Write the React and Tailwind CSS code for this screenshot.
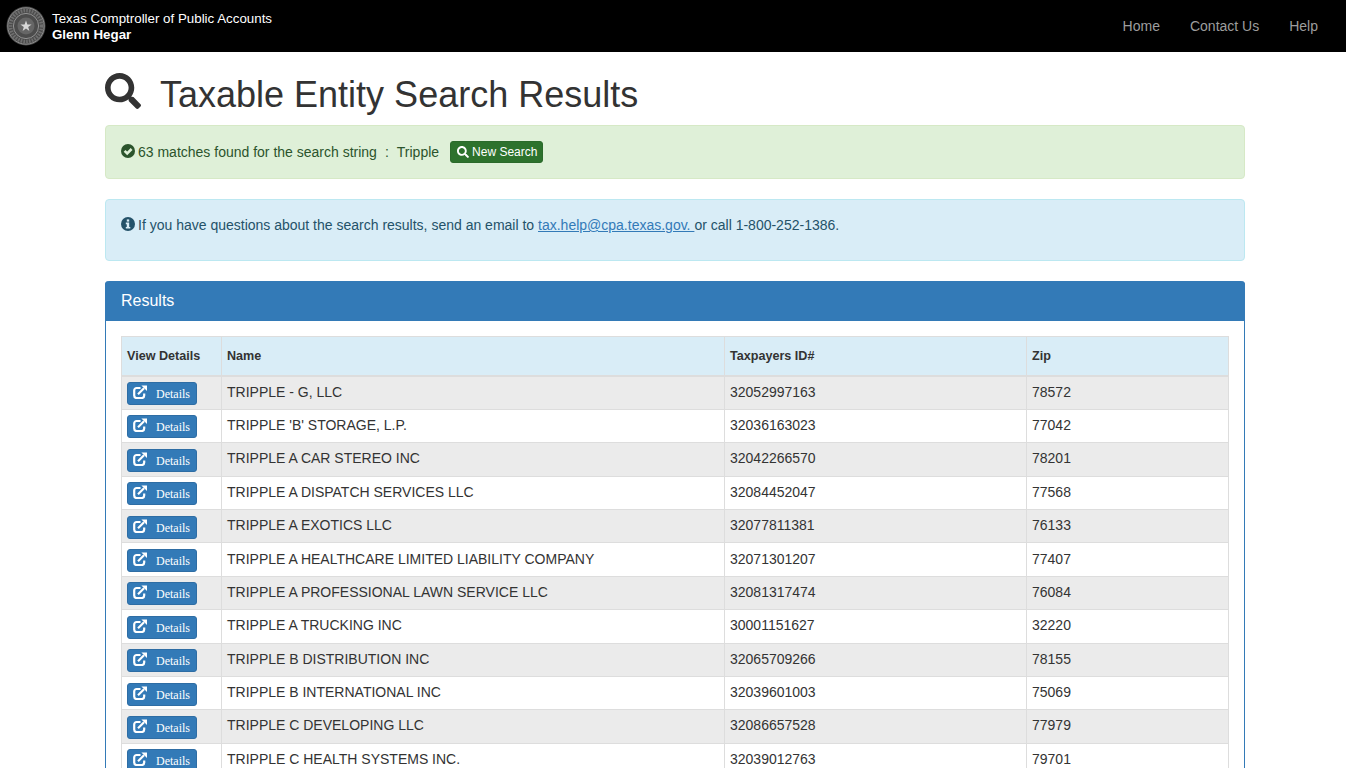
import React from "react";
import { FaSearch } from "react-icons/fa";

const rows = [
  ["TRIPPLE - G, LLC", "32052997163", "78572"],
  ["TRIPPLE 'B' STORAGE, L.P.", "32036163023", "77042"],
  ["TRIPPLE A CAR STEREO INC", "32042266570", "78201"],
  ["TRIPPLE A DISPATCH SERVICES LLC", "32084452047", "77568"],
  ["TRIPPLE A EXOTICS LLC", "32077811381", "76133"],
  ["TRIPPLE A HEALTHCARE LIMITED LIABILITY COMPANY", "32071301207", "77407"],
  ["TRIPPLE A PROFESSIONAL LAWN SERVICE LLC", "32081317474", "76084"],
  ["TRIPPLE A TRUCKING INC", "30001151627", "32220"],
  ["TRIPPLE B DISTRIBUTION INC", "32065709266", "78155"],
  ["TRIPPLE B INTERNATIONAL INC", "32039601003", "75069"],
  ["TRIPPLE C DEVELOPING LLC", "32086657528", "77979"],
  ["TRIPPLE C HEALTH SYSTEMS INC.", "32039012763", "79701"],
];

function Seal() {
  return (
    <svg width="40" height="40" viewBox="0 0 40 40" className="shrink-0">
      <circle cx="20" cy="20" r="19.5" fill="#4a4a4a" />
      <circle cx="20" cy="20" r="18.2" fill="none" stroke="#8c8c8c" strokeWidth="1" />
      <circle cx="20" cy="20" r="15.5" fill="none" stroke="#6f6f6f" strokeWidth="3.6" strokeDasharray="1.6 1.2" />
      <circle cx="20" cy="20" r="12.6" fill="#4c4c4c" stroke="#9a9a9a" strokeWidth="0.9" />
      <circle cx="20" cy="20" r="8.5" fill="#666" />
      <polygon points="20,14.5 21.4,18.4 25.6,18.4 22.2,20.9 23.4,25 20,22.6 16.6,25 17.8,20.9 14.4,18.4 18.6,18.4" fill="#d8d8d8" />
    </svg>
  );
}

function ShareIcon() {
  return (
    <svg width="14" height="14" viewBox="0 0 14 14" className="shrink-0 mr-[9px] -mt-[3px]">
      <path d="M7.5 3H3.6A2.4 2.4 0 0 0 1.2 5.4v5.2A2.4 2.4 0 0 0 3.6 13h5.2a2.4 2.4 0 0 0 2.4-2.4V8.5" fill="none" stroke="#fff" strokeWidth="2.2" />
      <path d="M8.4 0.4H14V6Z" fill="#fff" />
      <path d="M5 9.2L11 3.2" fill="none" stroke="#fff" strokeWidth="2.2" />
    </svg>
  );
}

function CheckSign() {
  return (
    <svg width="14" height="14" viewBox="0 0 14 14" className="shrink-0 mr-[3px] -mt-[2px]">
      <circle cx="7" cy="7" r="7" fill="#2b542c" />
      <path d="M3.6 6.8L6.2 9.4L10.6 5" fill="none" stroke="#dff0d8" strokeWidth="2.6" />
    </svg>
  );
}

function InfoSign() {
  return (
    <svg width="14" height="14" viewBox="0 0 14 14" className="shrink-0 mr-[3px] mt-[2px]">
      <circle cx="7" cy="7" r="7" fill="#245269" />
      <rect x="5.8" y="2.4" width="2.4" height="2.2" fill="#d9edf7" />
      <path d="M4.8 5.6H8.2V10H9.3V11.6H4.8V10H5.8V7.2H4.8Z" fill="#d9edf7" />
    </svg>
  );
}

export default function App() {
  return (
    <div className="h-[768px] overflow-hidden bg-white text-[14px] leading-[20px] text-[#333] font-['Liberation_Sans',Arial,sans-serif]">
      <nav className="h-[52px] bg-black flex items-center justify-between pl-[6px] pr-[13px]">
        <div className="flex items-center gap-[6px]">
          <Seal />
          <div className="text-white text-[13.33px] leading-[16px] pt-[2px]">
            <div>Texas Comptroller of Public Accounts</div>
            <div className="font-bold">Glenn Hegar</div>
          </div>
        </div>
        <div className="flex text-[#9d9d9d]">
          <a className="px-[15px]">Home</a>
          <a className="px-[15px]">Contact Us</a>
          <a className="px-[15px]">Help</a>
        </div>
      </nav>

      <main className="w-[1140px] ml-[105px]">
        <h1 className="flex items-start h-[73px] text-[36px] leading-[40px] font-normal text-[#333]">
          <FaSearch className="text-[36px] mt-[21px] mr-[19px]" />
          <span className="mt-[23px]">Taxable Entity Search Results</span>
        </h1>

        <div className="h-[54px] mb-[20px] flex items-center rounded-[4px] border border-[#d6e9c6] bg-[#dff0d8] text-[#2b542c] pl-[15px]">
          <CheckSign />
          <span>63 matches found for the search string</span>
          <span className="ml-[8px]">:</span>
          <span className="ml-[8px]">Tripple</span>
          <a className="ml-[11px] h-[22px] flex items-center rounded-[3px] bg-[#2d722d] border border-[#2b6a2b] text-white text-[12px] pl-[6px] pr-[5px]">
            <FaSearch className="text-[12px] mr-[3px]" />
            New Search
          </a>
        </div>

        <div className="h-[62px] mb-[20px] flex items-start rounded-[4px] border border-[#bce8f1] bg-[#d9edf7] text-[#245269] pl-[15px] pt-[15px]">
          <InfoSign />
          <span>
            If you have questions about the search results, send an email to{" "}
            <a className="text-[#337ab7] underline">tax.help@cpa.texas.gov. </a>
            {" "}or call 1-800-252-1386.
          </span>
        </div>

        <section className="rounded-t-[4px] border-x border-[#337ab7]">
          <div className="-mx-px h-[40px] flex items-center rounded-t-[4px] bg-[#337ab7] text-white text-[16px] px-[16px]">
            Results
          </div>
          <div className="p-[15px]">
            <table className="w-full table-fixed border-collapse">
              <colgroup>
                <col className="w-[100px]" />
                <col className="w-[503px]" />
                <col className="w-[302px]" />
                <col />
              </colgroup>
              <thead>
                <tr className="h-[39.4px] bg-[#d9edf7] font-bold text-left text-[12.6px]">
                  <th className="border border-[#ddd] border-b-2 px-[5px]">View Details</th>
                  <th className="border border-[#ddd] border-b-2 px-[5px]">Name</th>
                  <th className="border border-[#ddd] border-b-2 px-[5px]">Taxpayers ID#</th>
                  <th className="border border-[#ddd] border-b-2 px-[5px]">Zip</th>
                </tr>
              </thead>
              <tbody>
                {rows.map((r, i) => (
                  <tr key={r[1]} className={i % 2 === 0 ? "h-[33.4px] bg-[#ebebeb]" : "h-[33.4px] bg-white"}>
                    <td className="border border-[#ddd] px-[5px] py-0 align-middle">
                      <a className="w-[70px] h-[23px] mt-[2px] flex items-center rounded-[3px] bg-[#337ab7] border border-[#2e6da4] text-white text-[12px] pl-[5px] font-['Liberation_Serif',serif]">
                        <ShareIcon />
                        <span className="mt-[1px]">Details</span>
                      </a>
                    </td>
                    <td className="border border-[#ddd] px-[5px] pt-0 pb-[2px] align-middle">{r[0]}</td>
                    <td className="border border-[#ddd] px-[5px] pt-0 pb-[2px] align-middle">{r[1]}</td>
                    <td className="border border-[#ddd] px-[5px] pt-0 pb-[2px] align-middle">{r[2]}</td>
                  </tr>
                ))}
              </tbody>
            </table>
          </div>
        </section>
      </main>
    </div>
  );
}
